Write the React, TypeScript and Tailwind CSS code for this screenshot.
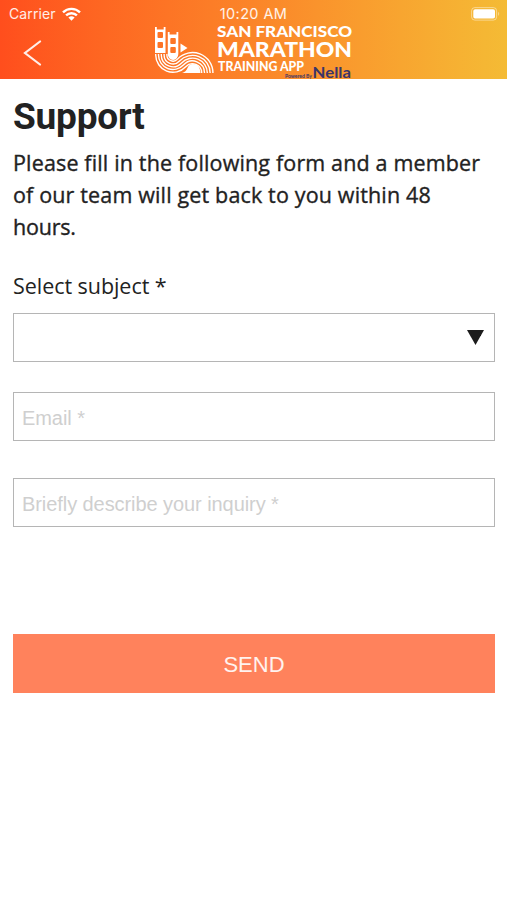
import { clsx } from 'clsx';

// Track lanes: a bowl around (18, 29) that flips into an arch around (37.5, 47)
const lanes = [17.3, 14.5, 11.7, 8.9, 6.1].map((r) => {
  const outer = 26.54 - r;
  const x = 18 + r * 0.735;
  const y = 29 + r * 0.678;
  return `M${18 - r} 28V29A${r} ${r} 0 0 0 ${x} ${y}A${outer} ${outer} 0 0 1 ${37.5 + outer} 47`;
});

function MarathonLogo() {
  return (
    <svg className="block h-[54px] w-[200px] overflow-visible" viewBox="0 0 200 54" role="img">
      <g fill="none" stroke="#fff" strokeWidth="1.4">
        {lanes.map((d) => (
          <path key={d} d={d} />
        ))}
      </g>
      <path d="M27 47q4-1 5.5-5t5.5-4q7 0 7.500 9z" fill="#fff" />
      <path
        fillRule="evenodd"
        fill="#fff"
        d="M0 1h1.800v2.500h6.900V1h1.800v26H0zM2.500 7q0-1 1-1h3.500q1 0 1 1v4q0 1-1 1h-3.500q-1 0-1-1zM2.500 17q0-1 1-1h3.500q1 0 1 1v4q0 1-1 1h-3.500q-1 0-1-1z"
      />
      <path
        fillRule="evenodd"
        fill="#fff"
        d="M12.800 6h1.800v2.500h6.900V6h1.800v22a5.250 6 0 0 1-10.500 0zM15.300 13q0-1 1-1h3.500q1 0 1 1v4q0 1-1 1h-3.500q-1 0-1-1zM15.300 22q0-1 1-1h3.500q1 0 1 1v4q0 1-1 1h-3.500q-1 0-1-1z"
      />
      <path d="M25.500 17.500l7 4.500-7 4.500z" fill="#fff" />
      <g fill="#fff" fontFamily="Lato, sans-serif" fontWeight="900">
        <text x="62" y="10.500" fontSize="15" textLength="135" lengthAdjust="spacingAndGlyphs">
          SAN FRANCISCO
        </text>
        <text x="62" y="30.500" fontSize="21.500" textLength="135" lengthAdjust="spacingAndGlyphs">
          MARATHON
        </text>
        <text x="63" y="44.800" fontSize="13.500" textLength="86" lengthAdjust="spacingAndGlyphs">
          TRAINING APP
        </text>
      </g>
      <g fill="#3b3468" fontFamily="Lato, sans-serif">
        <text x="130" y="51.800" fontSize="5.500" fontWeight="700" textLength="27" lengthAdjust="spacingAndGlyphs">
          Powered By
        </text>
        <text x="157.500" y="52" fontSize="16" fontWeight="700" textLength="38.500" lengthAdjust="spacingAndGlyphs">
          Nella
        </text>
      </g>
    </svg>
  );
}

function WifiIcon() {
  return (
    <svg className="h-[14px] w-[19px]" viewBox="0 0 19 14" fill="none" stroke="#fff" strokeWidth="2.4">
      <path d="M1 5.3a12.2 12.2 0 0 1 17 0" />
      <path d="M4.1 8.4a7.7 7.7 0 0 1 10.8 0" />
      <path d="M9.5 13.8L6.4 10.6a4.5 4.5 0 0 1 6.2 0z" fill="#fff" stroke="none" />
    </svg>
  );
}

function BatteryIcon() {
  return (
    <svg className="h-[14px] w-[30px]" viewBox="0 0 30 14">
      <rect x="0.6" y="0.6" width="25" height="12.5" rx="3.2" fill="none" stroke="#fff" strokeOpacity="0.45" />
      <rect x="2.3" y="2.3" width="21.7" height="9.2" rx="1.8" fill="#fff" />
      <path d="M27.2 4.8q2 2 0 4.2z" fill="#fff" fillOpacity="0.5" />
    </svg>
  );
}

function Header() {
  return (
    <header className="h-[79px] bg-linear-to-r from-[#ff4e1d] via-[#fb8529] to-[#f4bb35]">
      <div className="grid h-[26px] grid-cols-3 items-center pt-[2px] pr-[6px] pl-[6px] font-['Inter',sans-serif] text-[14px] leading-none text-white/90">
        <div className="flex items-center gap-[6px] pl-[3px]">
          <span className="tracking-[0.1px]">Carrier</span>
          <WifiIcon />
        </div>
        <span className="text-center text-[14.5px] tracking-[0.4px]">10:20 AM</span>
        <div className="flex justify-end">
          <BatteryIcon />
        </div>
      </div>
      <div className="flex h-[53px] pl-[23px]">
        <button type="button" aria-label="Back" className="w-[132px]">
          <svg className="h-[26px] w-[20px]" viewBox="0 0 20 26" fill="none" stroke="#fff" strokeWidth="2.2" strokeOpacity="0.9" strokeLinecap="round">
            <path d="M17 1.5L2 13l15 11.5" />
          </svg>
        </button>
        <MarathonLogo />
      </div>
    </header>
  );
}

function Field({ placeholder, className }: { placeholder: string; className?: string }) {
  return (
    <input
      type="text"
      placeholder={placeholder}
      className={clsx(
        "block h-[49px] w-full border border-[#b5b5b5] bg-white px-[8px] pt-[3px] font-['Liberation_Sans',Arial,sans-serif] text-[20px] tracking-[-0.07px] outline-none placeholder:text-[#cfcfcf]",
        className
      )}
    />
  );
}

export default function App() {
  return (
    <div className="min-h-screen bg-white font-['Open_Sans',sans-serif] text-[#222]">
      <Header />
      <main className="pt-[15px] pr-[12px] pl-[13px]">
        <h1 className="font-['Roboto',sans-serif] text-[37px] leading-[45px] font-bold tracking-[-0.2px]">
          Support
        </h1>
        <p className="mt-[8px] text-[21.5px] leading-[32px] tracking-[0.15px] whitespace-nowrap [-webkit-text-stroke:0.35px_#222]">
          <span className="block">Please fill in the following form and a member</span>
          <span className="block">of our team will get back to you within 48</span>
          <span className="block tracking-[-0.2px]">hours.</span>
        </p>
        <div className="mt-[27px] text-[21.5px] leading-[32px] tracking-[-0.05px]">Select subject *</div>
        <button
          type="button"
          aria-label="Select subject"
          className="mt-[11px] flex h-[49px] w-full items-center justify-end border border-[#b5b5b5] pr-[10px]"
        >
          <svg className="h-[15px] w-[17px]" viewBox="0 0 17 15" fill="#1c1c1c">
            <path d="M0 0h17L8.5 15z" />
          </svg>
        </button>
        <Field placeholder="Email *" className="mt-[30px]" />
        <Field placeholder="Briefly describe your inquiry *" className="mt-[37px]" />
        <button
          type="button"
          className="mt-[107px] block h-[59px] w-full bg-[#ff825c] pt-[1px] font-['Liberation_Sans',Arial,sans-serif] text-[22px] text-white/90"
        >
          SEND
        </button>
      </main>
    </div>
  );
}
